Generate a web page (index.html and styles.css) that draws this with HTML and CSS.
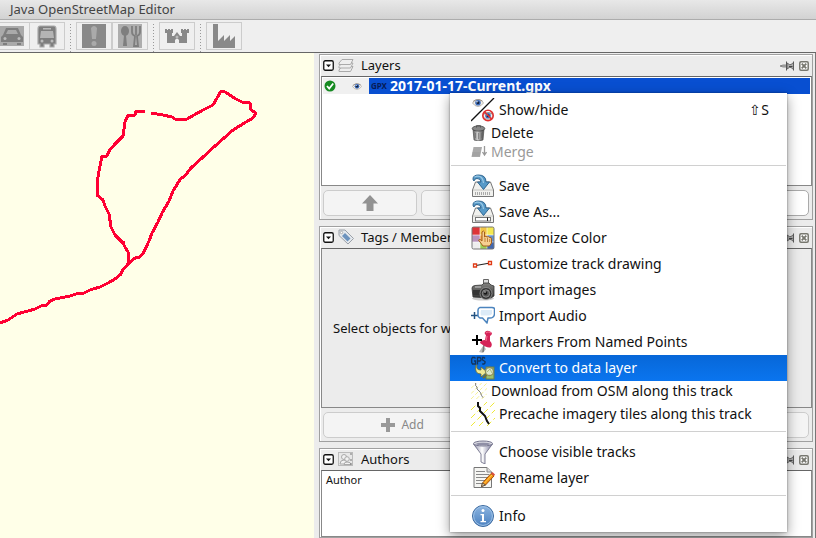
FILE: index.html
```html
<!DOCTYPE html>
<html lang="en">
<head>
<meta charset="utf-8">
<title>Java OpenStreetMap Editor</title>
<link rel="stylesheet" href="styles.css">
</head>
<body>
<svg class="defs" aria-hidden="true">
  <defs>
    <linearGradient id="metal" x1="0" x2="1"><stop offset="0" stop-color="#555"/><stop offset=".4" stop-color="#ccc"/><stop offset="1" stop-color="#444"/></linearGradient>
    <linearGradient id="funnel" x1="0" x2="1"><stop offset="0" stop-color="#8888a4"/><stop offset=".45" stop-color="#fff"/><stop offset="1" stop-color="#77779a"/></linearGradient>
    <linearGradient id="blue" x1="0" y1="0" x2="0" y2="1"><stop offset="0" stop-color="#8db5e0"/><stop offset="1" stop-color="#4a80c0"/></linearGradient>
    <linearGradient id="camera" x1="0" y1="0" x2="0" y2="1"><stop offset="0" stop-color="#858582"/><stop offset="1" stop-color="#333"/></linearGradient>
    <symbol id="eye" viewBox="0 0 12 10">
      <path d="M.5 5Q3 1 7 1.500Q10 2 11.500 5Q9 8.500 6 8.500Q3 8.500.5 5Z" fill="#f4f0ea" stroke="#aaa49c" stroke-width=".8"/>
      <path d="M1 3.500Q5 0 10.500 3" fill="none" stroke="#8a8078" stroke-width=".8"/>
      <circle cx="6" cy="4.800" r="2.800" fill="#3f6fbd"/><circle cx="6" cy="4.800" r="1.400" fill="#10203c"/><circle cx="5" cy="3.800" r=".7" fill="#fff"/>
    </symbol>
    <symbol id="fold" viewBox="0 0 11 11">
      <rect x=".75" y=".75" width="9.500" height="9.500" rx="1.500" fill="#fff" stroke="#111" stroke-width="1.300"/><path d="M3 4.500h5L5.500 7.200Z" fill="#111"/>
    </symbol>
    <symbol id="pin" viewBox="0 0 15 10">
      <path d="M0 5L3 4H7V6H3Z" fill="#bbb" stroke="#666" stroke-width=".7"/><path d="M6.500.5V9.500M13.500.5V9.500" stroke="#555" stroke-width="1"/><path d="M7 2L9.500 3.500H11L13.500 1.500V8.500L11 6.500H9.500L7 8Z" fill="#aaa" stroke="#555" stroke-width=".8"/><path d="M9 5.500H12.500" stroke="#444"/>
    </symbol>
    <symbol id="close" viewBox="0 0 10 10">
      <rect x=".8" y=".8" width="8.400" height="8.400" rx="1.200" fill="#fff" stroke="#77776f" stroke-width="1.500"/><path d="M2.700 2.700L7.300 7.300M7.300 2.700L2.700 7.300" stroke="#77776f" stroke-width="1.900"/>
    </symbol>
    <symbol id="disk" viewBox="0 0 24 24">
      <path d="M4.500 8H19.500L22.500 16V22.500H1.500V16Z" fill="#f1f1ee" stroke="#777" stroke-linejoin="round"/><path d="M2 16H22" stroke="#c4c4c0"/>
      <path d="M2 5Q2 1 7.500 1Q15 1 15 8H18.500L12.500 15.500L6.500 8H10Q10 4.500 6 4.500Q3.500 4.500 3 7Q2 6 2 5Z" fill="#579ac8" stroke="#2f6590" stroke-linejoin="round"/><path d="M3.500 3Q6 1.500 9 2.500Q12 4 12.500 9" fill="none" stroke="#9bc9e6" stroke-width="1.200"/>
    </symbol>
    <symbol id="hatch" viewBox="0 0 24 24">
      <path d="M0 8L8 0M0 16L16 0M0 24L24 0M8 24L24 8M16 24L24 16" stroke="#efe93a" stroke-width="1" stroke-dasharray="6 3"/>
      <path d="M7 0V4L9 6V9L12 12L14 14L16 19L18 22" fill="none" stroke="#111"/>
    </symbol>
  </defs>
</svg>

<header class="titlebar"><h1>Java OpenStreetMap Editor</h1></header>

<nav class="toolbar" aria-label="Presets">
  <div class="group first">
    <button class="tool" aria-label="Car"><svg width="24" height="24" viewBox="0 0 24 24"><rect y="2" width="24" height="20" fill="#aaa"/><path d="M3 11L6 4H18L21 11L23 13V18H1V13Z" fill="#7e7e7e"/><path d="M6 10L8 6H16L18 10Z" fill="#aaa"/><path d="M3 19H7V21H3ZM17 19H21V21H17Z" fill="#7e7e7e"/><circle cx="5" cy="14.500" r="1.500" fill="#bbb"/><circle cx="19" cy="14.500" r="1.500" fill="#bbb"/></svg></button>
    <button class="tool" aria-label="Bus"><svg width="24" height="24" viewBox="0 0 24 24"><path d="M5 2H19Q21 2 21 5V20H19V23H15V20H9V23H5V20H3V5Q3 2 5 2Z" fill="#7e7e7e" stroke="#aaa" stroke-width="1.200"/><rect x="8" y="4" width="8" height="1.500" fill="#bbb"/><path d="M6 7H18L19 14H5Z" fill="#b4b4b4"/><circle cx="7" cy="17" r="1.500" fill="#bbb"/><circle cx="17" cy="17" r="1.500" fill="#bbb"/></svg></button>
  </div>
  <div class="group">
    <button class="tool" aria-label="Hazard"><svg width="24" height="24" viewBox="0 0 24 24"><rect width="24" height="24" fill="#898989"/><path d="M9 4Q12 0 15 4L14 15H10Z" fill="#aaa"/><circle cx="12" cy="19.500" r="2.500" fill="#aaa"/></svg></button>
    <button class="tool" aria-label="Food"><svg width="24" height="24" viewBox="0 0 24 24"><rect width="24" height="24" fill="#adadad"/><ellipse cx="7" cy="7" rx="4" ry="5" fill="#7e7e7e"/><path d="M6 11H8L9 22H5Z" fill="#7e7e7e"/><path d="M14 2V8Q14 11 17 12L16 22H20L19 12Q22 11 22 8V2M18 2V11" fill="none" stroke="#7e7e7e" stroke-width="1.800"/></svg></button>
  </div>
  <div class="group">
    <button class="tool" aria-label="Castle"><svg width="24" height="24" viewBox="0 0 24 24"><path d="M0 5H2V6H3V5H5V6H6V5H8V9H7V12H9L12 8L15 12H17V9H16V5H18V6H19V5H21V6H22V5H24V9H22V19H14V16Q12 13 10 16V19H2V9H0Z" fill="#898989"/><circle cx="12" cy="13" r="1.500" fill="#bbb"/></svg></button>
  </div>
  <div class="group">
    <button class="tool" aria-label="Factory"><svg width="24" height="24" viewBox="0 0 24 24"><path d="M1 0H6V17L12 11V17L18 11V17L23 12V24H1Z" fill="#898989"/></svg></button>
  </div>
</nav>

<main class="workspace">
  <section class="map" aria-label="Map">
    <svg viewBox="0 53 314 485" preserveAspectRatio="xMinYMin slice" fill="none" stroke="#ff0033" stroke-width="3" stroke-linejoin="round" shape-rendering="crispEdges">
      <path d="M145 112L136 111L135 115L128 115L125 122L123 136L115 144L109 151L107 156L102 156L99 171L98 177L97 186L97 195L103 200L105 206L109 214L111 227L115 235L123 243L125 247L128 252L128 264M121 242H125"/>
      <path d="M151 113L163 115L172 117L175 119L187 119L203 110L213 105L217 98L221 91L225 92L236 99L242 102L250 103L251 110L256 113L253 118L246 122L233 130L224 138L215 146L202 158L191 168L184 177L181 178L173 191L169 201L162 213L158 222L152 233L149 241L144 252L140 257L135 258L128 264L122 271L121 274L115 279L108 283L100 287L90 290L84 293L76 294L70 296L55 299L50 301L47 305L43 305L35 309L17 314L8 320L0 323"/>
    </svg>
  </section>

  <aside class="dock">
    <section class="panel layers">
      <header class="panel-head">
        <button class="mini" aria-label="Collapse Layers"><svg width="11" height="11"><use href="#fold"/></svg></button>
        <svg width="16" height="16" viewBox="0 0 16 16"><g fill="#eee" stroke="#aaa"><path d="M1 13L4 9.500H15L12.500 14.500H1Z"/><path d="M1 9.500L4 6H15L12.500 11H1Z"/><path d="M1 6L4 2.500H15L12.500 7.500H1Z"/></g></svg>
        <h2>Layers</h2>
        <button class="mini" aria-label="Detach Layers"><svg width="15" height="10"><use href="#pin"/></svg></button>
        <button class="mini" aria-label="Close Layers"><svg width="10" height="10"><use href="#close"/></svg></button>
      </header>
      <div class="layer-list">
        <div class="layer">
          <svg width="12" height="12" viewBox="0 0 12 12"><circle cx="6" cy="6" r="5.500" fill="#168a22"/><path d="M3 6L5.200 8.500L9.200 3.500" fill="none" stroke="#fff" stroke-width="1.800"/></svg>
          <svg class="visible" width="10" height="9"><use href="#eye"/></svg>
          <div class="layer-name"><small>GPX</small><span>2017-01-17-Current.gpx</span></div>
        </div>
      </div>
      <div class="actions">
        <button aria-label="Move up"><svg width="16" height="16" viewBox="0 0 16 16"><path d="M8 0L16 8.500H11.500V16H4.500V8.500H0Z" fill="#929292"/></svg></button>
        <button aria-label="Move down"></button><button aria-label="Activate"></button><button aria-label="Toggle"></button><button class="on" aria-label="Delete layer"></button>
      </div>
    </section>

    <section class="panel tags">
      <header class="panel-head">
        <button class="mini" aria-label="Collapse Tags"><svg width="11" height="11"><use href="#fold"/></svg></button>
        <svg width="16" height="16" viewBox="0 0 16 16"><path d="M1 1L7 1L15.500 9.500L10 15L1 6.500Z" fill="#e4e8ed" stroke="#9aa0a8" stroke-linejoin="round"/><path d="M7 4L12.500 9.500L9.500 12.500L4 7Z" fill="#6d93bd"/><circle cx="3.500" cy="3.500" r="1.200" fill="#fff" stroke="#888" stroke-width=".6"/></svg>
        <h2>Tags / Members</h2>
        <button class="mini" aria-label="Detach Tags"><svg width="15" height="10"><use href="#pin"/></svg></button>
        <button class="mini" aria-label="Close Tags"><svg width="10" height="10"><use href="#close"/></svg></button>
      </header>
      <div class="placeholder">Select objects for wh</div>
      <div class="actions">
        <button><svg width="14" height="14" viewBox="0 0 14 14"><path d="M5 0H9V5H14V9H9V14H5V9H0V5H5Z" fill="#999"/></svg>Add</button>
        <button aria-label="Edit"></button><button aria-label="Delete tag"></button>
      </div>
    </section>

    <section class="panel authors">
      <header class="panel-head">
        <button class="mini" aria-label="Collapse Authors"><svg width="11" height="11"><use href="#fold"/></svg></button>
        <svg width="16" height="16" viewBox="0 0 16 16"><rect x=".5" y="1.500" width="14" height="13" fill="#e8e8e8" stroke="#bbb"/><g fill="#f2f2f2" stroke="#aaa"><circle cx="6" cy="6" r="2.500"/><path d="M2 13Q2 9 6 9Q9 9 9 13Z"/><circle cx="9" cy="8" r="2.300"/><path d="M6 13.500Q6 11 9 11Q13 11 13 13.500Z"/></g><path d="M13 2V4M13 8V10M13 12V14" stroke="#777"/></svg>
        <h2>Authors</h2>
        <button class="mini" aria-label="Detach Authors"><svg width="15" height="10"><use href="#pin"/></svg></button>
        <button class="mini" aria-label="Close Authors"><svg width="10" height="10"><use href="#close"/></svg></button>
      </header>
      <div class="author-body"><table><thead><tr><th scope="col">Author</th></tr></thead></table></div>
    </section>
  </aside>
</main>

<div class="menu" role="menu">
  <button role="menuitem"><svg width="24" height="24" viewBox="0 0 24 24"><use href="#eye" x="1" y="0" width="12" height="10"/><path d="M0 23L23 0" stroke="#111" stroke-width="1.300"/><use href="#eye" x="11" y="13" width="12" height="10"/><circle cx="17" cy="17.500" r="5.200" fill="none" stroke="#e03030" stroke-width="1.600"/><path d="M13.500 14L20.500 21" stroke="#e03030" stroke-width="1.600"/></svg><span>Show/hide</span><kbd>⇧S</kbd></button>
  <button role="menuitem" class="small"><svg width="16" height="16" viewBox="0 0 16 16"><path d="M2 4H13L12 15Q7.500 17 3 15Z" fill="url(#metal)" stroke="#555" stroke-width=".7"/><ellipse cx="7.500" cy="3.500" rx="6.300" ry="2.600" fill="#888" stroke="#444" stroke-width=".8"/><path d="M5.500 2.500V.7H9.500V2.500" fill="none" stroke="#555"/><path d="M4.500 8V13M7.500 8V14M10.500 8V13" stroke="#666" stroke-width=".6"/></svg><span>Delete</span></button>
  <button role="menuitem" class="small" disabled><svg width="16" height="16" viewBox="0 0 16 16"><path d="M2.500 3H11L9 13H.5Z" fill="#aaa"/><path d="M1 9H9M1 11H9" stroke="#999" stroke-width=".7"/><path d="M13.500 2V10M11.500 8L13.500 11L15.500 8" fill="none" stroke="#999" stroke-width="1.300"/></svg><span>Merge</span></button>
  <hr>
  <button role="menuitem"><svg width="24" height="24" viewBox="0 0 24 24"><use href="#disk" width="24" height="24"/><path d="M4 19.500H20" stroke="#aaa" stroke-width="3" stroke-dasharray="1 1"/></svg><span>Save</span></button>
  <button role="menuitem"><svg width="24" height="24" viewBox="0 0 24 24"><use href="#disk" width="24" height="24"/><rect x="4.500" y="17.500" width="15" height="3.500" fill="#fff" stroke="#777"/><path d="M16.500 17.500V21" stroke="#222"/></svg><span>Save As...</span></button>
  <button role="menuitem"><svg width="24" height="24" viewBox="0 0 24 24"><path d="M1 1H9V9H1Z" fill="#dd3438"/><path d="M9 1H16V9H9Z" fill="#f2c444"/><path d="M16 1H23V9H16Z" fill="#f4e850"/><path d="M1 9H9V16H1Z" fill="#b992bd"/><path d="M9 9H16V16H9Z" fill="#ef9c45"/><path d="M16 9H23V16H16Z" fill="#6590cc"/><path d="M1 16H9V23H1Z" fill="#eee"/><path d="M9 16H16V23H9Z" fill="#9dce55"/><path d="M16 16H23V23H16Z" fill="#4268af"/><path d="M9 1V23M16 1V23M1 9H23M1 16H23" stroke="#ffffff99"/><rect x="1" y="1" width="22" height="22" rx="1.500" fill="none" stroke="#777"/><path d="M11 13V6Q12.500 4 13.500 6V11Q15 9.500 16 11Q17.500 10 18.500 11.500Q20.500 11 20.500 13V17L18.500 20H12L7.500 14Q8.500 12 11 15Z" fill="#f7cf91" stroke="#a55f19" stroke-linejoin="round"/><path d="M14 12V16M16.500 12V16M18.700 13V16" stroke="#a55f19" stroke-width=".7"/></svg><span>Customize Color</span></button>
  <button role="menuitem"><svg width="24" height="24" viewBox="0 0 24 24"><path d="M5 13.500L19 11" stroke="#222" stroke-width="1.200"/><path d="M2.500 12H5.500V15H2.500ZM17.500 9.500H20.500V12.500H17.500Z" fill="#fff" stroke="#e03b16" stroke-width="1.300"/></svg><span>Customize track drawing</span></button>
  <button role="menuitem"><svg width="24" height="24" viewBox="0 0 24 24"><ellipse cx="12" cy="20.500" rx="11" ry="2" fill="#ccc"/><path d="M12.500 1.500H17.500V5.500H12.500Z" fill="#ddd" stroke="#666"/><path d="M1 10Q1 8 4 7.500L11 7L13 5H18L20 7L23 8V18L20 20L2 19Z" fill="url(#camera)" stroke="#333" stroke-width=".8"/><path d="M4 9H10" stroke="#bbb" stroke-width="1.200"/><path d="M2 12H9V17H2Z" fill="#343434"/><circle cx="15" cy="15.500" r="6" fill="#333" stroke="#999" stroke-width=".8"/><circle cx="15" cy="15.500" r="3.700" fill="#555" stroke="#aaa" stroke-width=".7"/><circle cx="14.500" cy="15" r="1.800" fill="#181818"/><circle cx="14" cy="14" r=".8" fill="#ddd"/></svg><span>Import images</span></button>
  <button role="menuitem"><svg width="24" height="24" viewBox="0 0 24 24"><path d="M0 11.500H7M3.500 8V15" stroke="#245382" stroke-width="1.500"/><path d="M9 3.500H21Q24 3.500 23.500 6V10Q23 14 19 14H17L16 19L11.500 14H9Q6.500 13 7 10V6Q7 4 9 3.500Z" fill="#fff" stroke="#4b84be" stroke-width="1.500" stroke-linejoin="round"/><path d="M10 6H21V10Q19 12 16 11.500H10Q9 10 10 6Z" fill="#dcebf8"/></svg><span>Import Audio</span></button>
  <button role="menuitem"><svg width="24" height="24" viewBox="0 0 24 24"><path d="M8 22L12 16L15 19L12 23Z" fill="#bbb"/><path d="M13 15L12 22" stroke="#777" stroke-width="1.500"/><path d="M14 2Q17-1 21 3Q21 5 19 6V11Q22 14 20 17Q17 19 9 13Q9 10 14 10L15 5Q13 4 14 2Z" fill="#d52358"/><path d="M15 3Q17 1 20 3M16 6L15 11" fill="none" stroke="#f0698c" stroke-width="1.200"/><path d="M1 10H11M6 5V15" stroke="#000" stroke-width="2"/></svg><span>Markers From Named Points</span></button>
  <button role="menuitem" class="selected"><svg width="24" height="24" viewBox="0 0 24 24"><g fill="none" stroke="#12335e" stroke-width="1.300"><path d="M4.500 2.500L3.500 1.500H1.500L.7 3V6.500L1.500 8H4.500V5H3"/><path d="M6.500 8.500V1.500H9L10 3V4L9 5H6.500"/><path d="M14 2.500L13 1.500H11.500V4L14 5.500V7L13 8H11.200"/></g><path d="M6 9Q4.500 14 10 14V11L16 16L10 21V18Q3 18 5 9Z" fill="#eee996" stroke="#686830" stroke-width=".8"/><rect x="15" y="11" width="8" height="12" fill="#9ac06d" stroke="#657a4d"/><path d="M12 22L16 18" stroke="#77732e" stroke-width="2"/><circle cx="18.500" cy="15.500" r="4" fill="#dce9cc" stroke="#8d8d57" stroke-width="1.300"/><path d="M16 16L19 13L21 17" fill="none" stroke="#adb977"/></svg><span>Convert to data layer</span></button>
  <button role="menuitem" class="small"><svg width="16" height="16"><use href="#hatch" opacity=".8"/></svg><span>Download from OSM along this track</span></button>
  <button role="menuitem" class="tall"><svg width="24" height="24" stroke-width="2"><use href="#hatch"/></svg><span>Precache imagery tiles along this track</span></button>
  <hr>
  <button role="menuitem"><svg width="24" height="24" viewBox="0 0 24 24"><path d="M2.500 4L10 14V22L14 24V14L21.500 4Z" fill="url(#funnel)" stroke="#666680" stroke-width=".8"/><ellipse cx="12" cy="3.500" rx="9.500" ry="2.500" fill="#d5d5de" stroke="#777790"/><ellipse cx="12" cy="4" rx="7" ry="1.300" fill="#8f8fa6"/></svg><span>Choose visible tracks</span></button>
  <button role="menuitem"><svg width="24" height="24" viewBox="0 0 24 24"><path d="M3 1.500H16L20.500 6V21.500H3Z" fill="#f5f5f2" stroke="#777" stroke-linejoin="round"/><path d="M16 1.500V6H20.500" fill="#ddd" stroke="#888"/><path d="M5 5.500H14M5 8.500H18M5 11.500H17M5 14.500H14M5 17.500H11" stroke="#888"/><path d="M11.500 17L20 7.500L23 10L14.500 19L10.500 20.500Z" fill="#f79416" stroke="#9c4a00" stroke-width=".9"/><path d="M10.500 20.500L11.500 17L14.500 19Z" fill="#ecd1a0" stroke="#333" stroke-width=".7"/><path d="M20 7.500L21.500 6L24 8.500L23 10Z" fill="#db4e3e"/><path d="M13.500 17L21 9" stroke="#ffd14b"/></svg><span>Rename layer</span></button>
  <hr>
  <button role="menuitem"><svg width="24" height="24" viewBox="0 0 24 24"><circle cx="12" cy="12" r="10.500" fill="url(#blue)" stroke="#3b699f"/><circle cx="12" cy="12" r="9.400" fill="none" stroke="#9fc3e8"/><circle cx="12" cy="6.500" r="1.500" fill="#fff"/><path d="M9.500 10H13V17H15V18.200H9.500V17H11V11.200H9.500Z" fill="#fff"/></svg><span>Info</span></button>
</div>
</body>
</html>
```
FILE: styles.css
```css
* { box-sizing: border-box; }
html, body { height: 100%; }
body {
  margin: 0;
  display: flex;
  flex-direction: column;
  position: relative;
  overflow: hidden;
  background: #ececec;
  color: #111;
  font: 13px/18px "Noto Sans", "Open Sans", sans-serif;
}
svg { display: block; flex: none; }
button {
  margin: 0;
  padding: 0;
  border: 0;
  background: none;
  color: inherit;
  font: inherit;
}
h1, h2 { margin: 0; font-size: 13px; font-weight: 400; }
.defs { position: absolute; width: 0; height: 0; }

.titlebar {
  flex: none;
  height: 20px;
  padding-left: 10px;
  background: linear-gradient(#e8e8e8, #d2d2d2);
  border-bottom: 1px solid #acacac;
}
.titlebar h1 { color: #444; line-height: 19px; }

.toolbar {
  flex: none;
  display: flex;
  height: 33px;
  padding-top: 2px;
  background: #efefef;
  border-bottom: 1px solid #666;
}
.group { display: flex; }
.group + .group {
  margin-left: 5px;
  padding-left: 6px;
  background: linear-gradient(#999 0 1px, transparent 1px) 0 2px / 1px 3px repeat-y;
}
.tool {
  width: 36px;
  height: 28px;
  display: grid;
  place-items: center;
  border: 1px solid #ccc;
}
.first { margin-left: -6px; }
.first .tool + .tool { margin-left: -1px; }

.workspace {
  flex: 1;
  min-height: 0;
  display: grid;
  grid-template-columns: minmax(0, 1fr) 502px;
}
.map { min-height: 0; overflow: hidden; background: #ffffe8; }
.map svg { width: 100%; height: 100%; }
.dock {
  min-height: 0;
  display: flex;
  flex-direction: column;
  gap: 6px;
  padding: 1px 2px 0 5px;
  border-right: 1px solid #777;
  overflow: hidden;
}
.panel {
  flex: none;
  display: flex;
  flex-direction: column;
  border: 1px solid #a0a0a0;
  box-shadow: inset 1px 1px #fff;
  padding-left: 1px;
}
.panel-head {
  flex: none;
  display: flex;
  align-items: center;
  gap: 4px;
  height: 21px;
  padding: 0 3px 0 2px;
}
.panel-head h2 { flex: 1; padding: 0 0 2px 3px; }
.panel-head > svg { margin-top: -2px; }
.mini { display: block; }

.layer-list, .placeholder, .author-body {
  border: 1px solid #888;
  border-top-color: #666;
}
.layer-list { height: 110px; padding: 1px; background: #fff; }
.layer { display: flex; align-items: center; height: 16px; padding-left: 1px; background: #f0f0f0; }
.visible { margin: 0 7px 0 16px; }
.layer-name {
  flex: 1;
  display: flex;
  align-items: center;
  gap: 3px;
  height: 16px;
  padding-left: 2px;
  background: #084fd1;
  color: #fff;
  font-size: 14px;
  font-weight: 700;
  line-height: 16px;
}
.layer-name small { color: #061b55; font-size: 8px; }

.actions { display: flex; gap: 4px; padding: 4px 3px 3px 2px; }
.actions button {
  flex: 1;
  display: flex;
  align-items: center;
  justify-content: center;
  gap: 6px;
  height: 26px;
  border: 1px solid #ccc;
  border-radius: 5px;
  background: #f4f4f4;
  color: #888;
  font-size: 12px;
}
.actions .on { background: #fff; border-color: #aaa; }
.placeholder { display: flex; align-items: center; height: 160px; padding-left: 11px; white-space: nowrap; }

.authors { flex: 1; }
.author-body { flex: 1; background: #fff; font-size: 11px; }
.author-body table { border-collapse: collapse; width: 100%; }
.author-body th { padding: 0 4px; font-weight: 400; text-align: left; line-height: 17px; }

.menu {
  position: absolute;
  top: 93px;
  left: 450px;
  width: 337px;
  padding: 4px 0 3px;
  background: #fff;
  box-shadow: 0 4px 12px #0006, 0 0 2px #0006;
  font-size: 14px;
}
.menu button {
  display: flex;
  align-items: center;
  gap: 4px;
  width: 100%;
  height: 26px;
  padding: 0 18px 0 21px;
  text-align: left;
  white-space: nowrap;
}
.menu .small { height: 19px; }
.menu .tall { height: 27px; }
.menu span { flex: 1; }
.menu kbd { font: inherit; }
.menu button:disabled { color: #999; }
.menu .selected { background: linear-gradient(#0767d8, #0a75ef); color: #fff; }
.menu hr { height: 1px; margin: 4px 1px 7px; border: 0; background: #d0d0d0; }
```
